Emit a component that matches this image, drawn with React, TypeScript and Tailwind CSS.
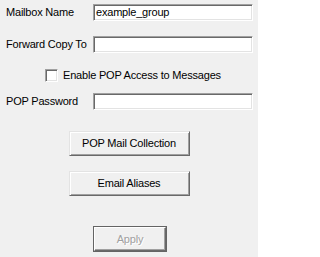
const font = { fontFamily: '"Liberation Sans", Arial, sans-serif' }

function Field({ label, value }: { label: string; value?: string }) {
	return (
		<div className="flex h-[17px] items-center">
			<span className="w-[87px] text-[11px] leading-none tracking-[-0.2px] text-black">{label}</span>
			<div className="flex h-[17px] w-[160px] items-center border border-t-[#a0a0a0] border-l-[#a0a0a0] border-r-white border-b-white bg-white pl-[2px] shadow-[inset_1px_1px_0_#696969,inset_-1px_-1px_0_#e3e3e3]">
				<span className="text-[11px] leading-none tracking-[-0.2px] text-black">{value}</span>
			</div>
		</div>
	)
}

function Button({ label }: { label: string }) {
	return (
		<div className="flex h-[25px] w-[121px] items-center justify-center border border-t-[#e3e3e3] border-l-[#e3e3e3] border-r-[#696969] border-b-[#696969] bg-[#f0f0f0] shadow-[inset_1px_1px_0_#ffffff,inset_-1px_-1px_0_#a0a0a0]">
			<span className="text-[11px] leading-none tracking-[-0.2px] text-black">{label}</span>
		</div>
	)
}

export default function App() {
	return (
		<div className="flex h-[257px] w-[258px] flex-col bg-[#f0f0f0] pl-[6px] pt-[4px]" style={font}>
			<Field label="Mailbox Name" value="example_group" />
			<div className="mt-[15px]">
				<Field label="Forward Copy To" />
			</div>
			<div className="mt-[16px] flex h-[13px] items-center pl-[39px]">
				<div className="h-[13px] w-[13px] border border-t-[#a0a0a0] border-l-[#a0a0a0] border-r-white border-b-white bg-white shadow-[inset_1px_1px_0_#696969,inset_-1px_-1px_0_#e3e3e3]" />
				<span className="ml-[5px] text-[11px] leading-none tracking-[-0.2px] text-black">Enable POP Access to Messages</span>
			</div>
			<div className="mt-[11px]">
				<Field label="POP Password" />
			</div>
			<div className="mt-[21px] flex flex-col items-center pr-[6px]">
				<Button label="POP Mail Collection" />
				<div className="mt-[15px]">
					<Button label="Email Aliases" />
				</div>
				<div className="mt-[30px] ml-[2px] h-[26px] w-[74px] border border-[#646464] bg-[#f0f0f0]">
					<div className="flex h-full w-full items-center justify-center border border-t-white border-l-white border-r-[#696969] border-b-[#696969] shadow-[inset_-1px_-1px_0_#a0a0a0]">
						<span className="text-[11px] leading-none tracking-[-0.2px] text-[#a0a0a0] [text-shadow:1px_1px_0_#ffffff]">Apply</span>
					</div>
				</div>
			</div>
		</div>
	)
}
